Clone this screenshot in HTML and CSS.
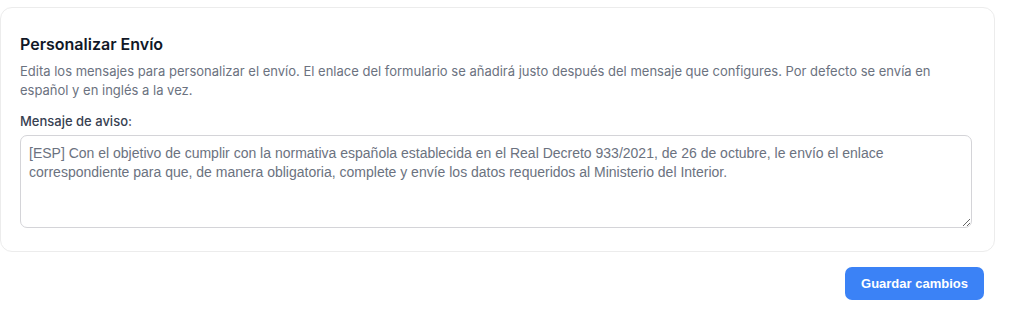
FILE: index.html
```html
<!DOCTYPE html>
<html lang="es">
<head>
<meta charset="utf-8">
<link rel="stylesheet" href="styles.css">
</head>
<body>
<div class="page">
  <section class="card">
    <h2 class="title">Personalizar Envío</h2>
    <p class="desc">Edita los mensajes para personalizar el envío. El enlace del formulario se añadirá justo después del mensaje que configures. Por defecto se envía en español y en inglés a la vez.</p>
    <label class="label" for="msg">Mensaje de aviso:</label>
    <textarea id="msg" class="field">[ESP] Con el objetivo de cumplir con la normativa española establecida en el Real Decreto 933/2021, de 26 de octubre, le envío el enlace correspondiente para que, de manera obligatoria, complete y envíe los datos requeridos al Ministerio del Interior.</textarea>
  </section>
  <div class="actions">
    <button class="btn" type="button">Guardar cambios</button>
  </div>
</div>
</body>
</html>
```
FILE: styles.css
```css
* { box-sizing: border-box; }
html, body { margin: 0; padding: 0; background: #ffffff; }
body { font-family: Inter, "Noto Sans", sans-serif; color: #111827; }
.page { padding-top: 7px; }
.card {
  width: 995px;
  background: #fff;
  border: 1px solid #ececec;
  border-radius: 12px;
  padding: 24px 22px 23px 19px;
  display: flex;
  flex-direction: column;
}
.title {
  margin: 0 0 6px;
  font-size: 16px;
  line-height: 24px;
  font-weight: 600;
  color: #111827;
}
.desc {
  margin: 0 0 11px;
  font-size: 13px;
  line-height: 19px;
  color: #6b7280;
}
.label {
  font-size: 13px;
  line-height: 20px;
  font-weight: 500;
  color: #374151;
  margin-bottom: 4px;
}
.field {
  width: 952px;
  height: 93px;
  border: 1px solid #d4d4d8;
  border-radius: 7px;
  padding: 8px 8px;
  font-family: "Liberation Sans", Arial, sans-serif;
  font-size: 14px;
  line-height: 19px;
  color: #6b7280;
  resize: vertical;
  outline: none;
}
.actions {
  display: flex;
  justify-content: flex-end;
  padding: 15px 40px 0 0;
}
.btn {
  height: 33px;
  width: 139px;
  border: none;
  border-radius: 7px;
  background: #3b82f6;
  color: #fff;
  font-family: "Liberation Sans", Arial, sans-serif;
  font-size: 13px;
  font-weight: 700;
  cursor: pointer;
}
```
